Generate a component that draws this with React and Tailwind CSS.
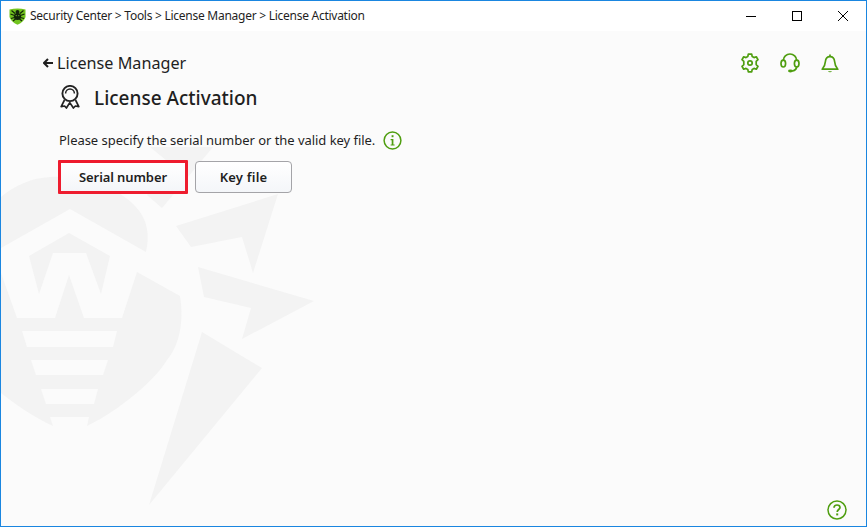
const font = { fontFamily: '"Noto Sans", "Open Sans", sans-serif' }

function Watermark() {
    return (
        <svg className="absolute top-0 left-0 w-full h-full" viewBox="1 1 865 525" fill="#f3f3f3">
            <path d="M1 197 C15 185 32 178 50 177 C85 175 125 190 140 212 C147 222 150 235 146 252 L70 209 L1 248 Z"/>
            <path d="M29 256 L69 233 L110 256 L101 294 L86 253 L53 253 L39 294 Z"/>
            <path d="M1 273 L17 318 L55 318 L69 275 L84 318 L122 318 L137 272 L180 296 C184 320 180 345 167 360 C155 380 120 410 87 426 L89 417 L50 417 L53 426 C35 418 15 404 1 393 Z"/>
            <path d="M176 226 L278 194 L253 273 L242 237 L191 247 Z"/>
            <path d="M198 267 L314 301 L242 339 L251 308 L204 297 Z"/>
            <path d="M202 332 L262 368 L149 505 Z"/>
            <path d="M150 147 L213 147 L162 208 L147 195 L172 165 Z"/>
            <g fill="#fbfbfb">
                <path d="M22 331 L117 331 L113 347 L27 347 Z"/>
                <path d="M31 360 L108 360 L103 375 L36 375 Z"/>
                <path d="M41 389 L98 389 L94 404 L46 404 Z"/>
            </g>
        </svg>
    )
}

function Logo() {
    return (
        <svg width="17" height="17" viewBox="0 0 17 17" className="shrink-0">
            <path d="M0.5 1.5 Q8.5 -0.5 16.5 1.5 L16.5 9 Q15 14 8.5 16.8 Q2 14 0.5 9 Z" fill="#72c41f"/>
            <g stroke="#13240a" strokeWidth="1.2" fill="none">
                <path d="M2.5 2.5 L6 5.5 M14.5 2.5 L11 5.5 M1.5 6 L5.5 7.5 M15.5 6 L11.5 7.5 M2 10.5 L5.5 9.5 M15 10.5 L11.5 9.5 M4 13 L6.5 11 M13 13 L10.5 11"/>
            </g>
            <ellipse cx="8.5" cy="8.5" rx="3.6" ry="3.6" fill="#13240a"/>
            <circle cx="8.5" cy="4" r="2" fill="#13240a"/>
            <circle cx="7.2" cy="7.6" r="0.6" fill="#72c41f"/>
            <circle cx="9.8" cy="7.6" r="0.6" fill="#72c41f"/>
        </svg>
    )
}

function GearIcon() {
    return (
        <svg width="20" height="20" viewBox="0 0 20 20" fill="none" stroke="#4f9e10" strokeWidth="1.7" strokeLinejoin="round">
            <path d="M8.3 1.2 H11.7 L12.2 3.6 L14 4.6 L16.3 3.8 L18 6.7 L16.2 8.3 V11.7 L18 13.3 L16.3 16.2 L14 15.4 L12.2 16.4 L11.7 18.8 H8.3 L7.8 16.4 L6 15.4 L3.7 16.2 L2 13.3 L3.8 11.7 V8.3 L2 6.7 L3.7 3.8 L6 4.6 L7.8 3.6 Z"/>
            <circle cx="10" cy="10" r="2.2"/>
        </svg>
    )
}

function HeadsetIcon() {
    return (
        <svg width="20" height="20" viewBox="0 0 20 20" fill="none" stroke="#4f9e10" strokeWidth="1.7" strokeLinecap="round">
            <path d="M3.4 7 A6.6 6 0 0 1 16.6 7"/>
            <ellipse cx="3.3" cy="10.6" rx="2.3" ry="3.4"/>
            <ellipse cx="16.7" cy="10.6" rx="2.3" ry="3.4"/>
            <path d="M16.7 14 Q16 17.6 12 18"/>
            <ellipse cx="10.4" cy="18" rx="2.4" ry="1.4" fill="#4f9e10" stroke="none"/>
        </svg>
    )
}

function BellIcon() {
    return (
        <svg width="18" height="19" viewBox="0 0 18 19" fill="none" stroke="#4f9e10" strokeWidth="1.7" strokeLinejoin="round">
            <path d="M9 2.6 C5.8 2.6 4.6 5 4.4 7.5 C4.2 11 3.2 13 1.2 15.2 H16.8 C14.8 13 13.8 11 13.6 7.5 C13.4 5 12.2 2.6 9 2.6 Z"/>
            <path d="M9 0.4 V2.4"/>
            <path d="M7 17.2 A2.1 1.6 0 0 0 11 17.2 Z" fill="#4f9e10" stroke="none"/>
        </svg>
    )
}

function AwardIcon() {
    return (
        <svg width="20" height="24" viewBox="0 0 20 24" fill="none" stroke="#222222" strokeWidth="1.9" className="-mt-[2px] -ml-[1px]">
            <circle cx="10" cy="8.5" r="7.6"/>
            <path d="M5.6 8.4 A4.4 4.4 0 0 1 14.4 8.4" strokeWidth="1.5"/>
            <path d="M4.5 15 L1.2 21.6 L4.6 21 L6.4 23 L9.8 17.6 L13.4 23 L15.4 21 L18.8 21.6 L15.5 15" strokeWidth="1.7" strokeLinejoin="round"/>
        </svg>
    )
}

function InfoIcon() {
    return (
        <svg width="19" height="19" viewBox="0 0 19 19" fill="none">
            <circle cx="9.5" cy="9.5" r="8.4" stroke="#4f9e10" strokeWidth="1.5"/>
            <rect x="8.6" y="4.2" width="1.9" height="2" fill="#4f9e10"/>
            <path d="M7.6 8 H10.4 V13.4 H11.6 V14.6 H7.6 V13.4 H8.7 V9.2 H7.6 Z" fill="#4f9e10"/>
        </svg>
    )
}

function HelpIcon() {
    return (
        <svg width="20" height="20" viewBox="0 0 20 20" fill="none">
            <circle cx="10" cy="10" r="9" stroke="#4f9e10" strokeWidth="1.5"/>
            <path d="M7 7.8 C7 5.8 8.4 5 10 5 C11.8 5 13 6 13 7.5 C13 9.5 10.2 9.6 10.2 12" stroke="#4f9e10" strokeWidth="1.7"/>
            <rect x="9.2" y="13.4" width="2" height="2" fill="#4f9e10"/>
        </svg>
    )
}

export default function App() {
    return (
        <div className="relative flex flex-col w-[867px] h-[527px] overflow-hidden border border-[#1a86e0] bg-[#fbfbfb] text-[#1f1f1f]" style={font}>
            <Watermark/>

            {/* Title bar */}
            <header className="relative flex items-center h-[30px] bg-white">
                <div className="flex items-center gap-[4px] pl-[8px] text-[12px]">
                    <Logo/>
                    <span className="tracking-[-0.265px]">Security Center &gt; Tools &gt; License Manager &gt; License Activation</span>
                </div>
                <div className="ml-auto flex items-center pr-[18px] gap-[36px] text-black">
                    <div className="w-[10px] h-px bg-black"></div>
                    <div className="w-[10px] h-[10px] border border-black"></div>
                    <svg width="10" height="10" viewBox="0 0 10 10" stroke="black" strokeWidth="1">
                        <path d="M0 0 L10 10 M10 0 L0 10"/>
                    </svg>
                </div>
            </header>

            {/* Main content */}
            <main className="relative flex-1 flex flex-col pl-[42px] pr-[27px]">
                <div className="flex items-center justify-between pt-[18px]">
                    <div className="flex items-center gap-[4px] text-[16.2px] leading-[28px]">
                        <svg width="10" height="10" viewBox="0 0 10 10" fill="none" stroke="#1f1f1f" strokeWidth="2">
                            <path d="M10 5 H1 M5 1 L1 5 L5 9"/>
                        </svg>
                        <span>License Manager</span>
                    </div>
                    <div className="flex items-center gap-[20px]">
                        <GearIcon/>
                        <HeadsetIcon/>
                        <div className="ml-[1px]"><BellIcon/></div>
                    </div>
                </div>

                <div className="flex items-center gap-[14px] mt-[7px] pl-[18px]">
                    <AwardIcon/>
                    <h1 className="text-[19px] leading-[28px] font-medium">License Activation</h1>
                </div>

                <div className="flex items-center gap-[8px] mt-[18px] pl-[16px] text-[13px] leading-[20px]">
                    <span className="tracking-[-0.04px]">Please specify the serial number or the valid key file.</span>
                    <InfoIcon/>
                </div>

                <div className="flex items-center gap-[7px] mt-[10px] pl-[15px] text-[13px] font-semibold">
                    <button className="w-[130px] h-[34px] pt-[2px] border-[3px] border-[#ee1c2e] rounded-[1px] bg-gradient-to-b from-white to-[#f4f6f9] tracking-[-0.1px]">
                        Serial number
                    </button>
                    <button className="w-[97px] h-[32px] pt-[2px] border border-[#a4a4a8] rounded-[4px] bg-gradient-to-b from-white to-[#f4f6f9] tracking-[0.2px]">
                        Key file
                    </button>
                </div>

                <div className="mt-auto ml-auto pb-[6px] -mr-[8px]">
                    <HelpIcon/>
                </div>
            </main>
        </div>
    )
}
